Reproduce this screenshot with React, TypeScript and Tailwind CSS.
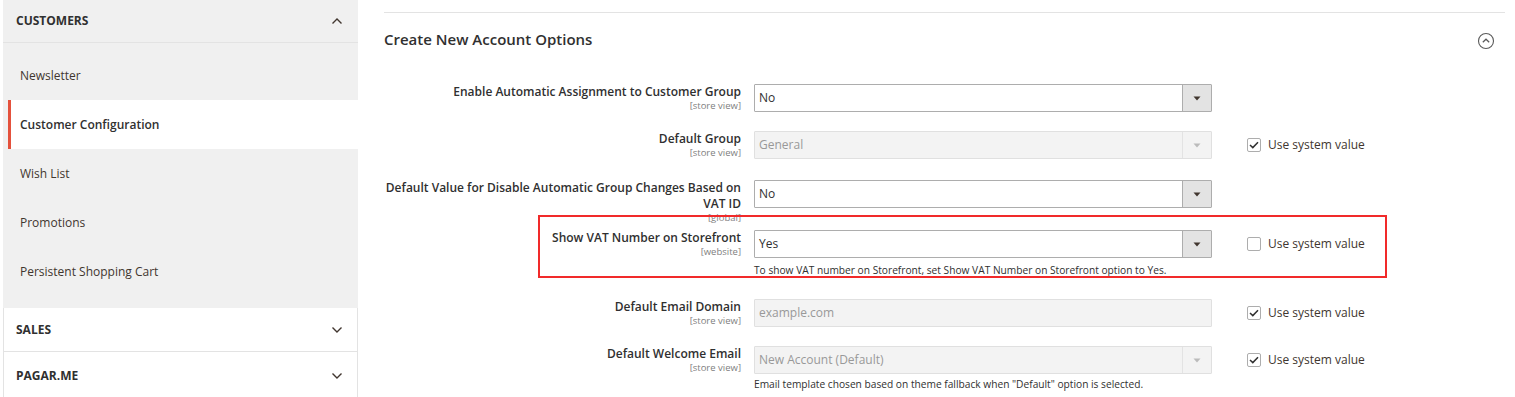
import React from "react";

const font = { fontFamily: '"Open Sans", "Noto Sans", Arial, sans-serif' };

function Chevron({ up }: { up?: boolean }) {
  return (
    <svg width="12" height="8" viewBox="0 0 12 8" className="text-[#41362f]">
      {up ? (
        <path d="M1.5 6.5 L6 2 L10.5 6.5" fill="none" stroke="currentColor" strokeWidth="1.4" />
      ) : (
        <path d="M1.5 1.5 L6 6 L10.5 1.5" fill="none" stroke="currentColor" strokeWidth="1.4" />
      )}
    </svg>
  );
}

function Sidebar() {
  const items = ["Newsletter", "Customer Configuration", "Wish List", "Promotions", "Persistent Shopping Cart"];
  return (
    <div className="ml-[3px] w-[355px] shrink-0 flex flex-col">
      <div className="h-[43px] bg-[#f0f0f0] border-b border-[#e3e3e3] flex items-center justify-between pl-[13px] pr-[15px]">
        <span className="text-[12px] font-bold text-[#303030]">CUSTOMERS</span>
        <Chevron up />
      </div>
      <div className="bg-[#f0f0f0] pt-[8px] pb-[12px]">
        {items.map((it) => {
          const active = it === "Customer Configuration";
          return (
            <div
              key={it}
              className={
                active
                  ? "h-[49px] ml-[5px] bg-white border-l-[3px] border-[#e4513c] flex items-center pl-[9px] text-[12px] text-[#303030] font-semibold"
                  : "h-[49px] flex items-center pl-[17px] text-[12px] text-[#41362f]"
              }
            >
              {it}
            </div>
          );
        })}
      </div>
      <div className="h-[44px] bg-white border-x border-b border-[#e3e3e3] flex items-center justify-between pl-[12px] pr-[14px]">
        <span className="text-[12px] font-bold text-[#303030]">SALES</span>
        <Chevron />
      </div>
      <div className="h-[45px] pt-[3px] bg-white border-x border-[#e3e3e3] flex items-center justify-between pl-[12px] pr-[14px]">
        <span className="text-[12px] font-bold text-[#303030]">PAGAR.ME</span>
        <Chevron />
      </div>
    </div>
  );
}

function Select({ value, disabled, noButton }: { value: string; disabled?: boolean; noButton?: boolean }) {
  return (
    <div
      className={
        "h-[28px] w-[458px] flex rounded-[1px] border " +
        (disabled ? "border-[#e0e0e0] bg-[#f3f3f3]" : "border-[#adadad] bg-white")
      }
    >
      <div
        className={
          "flex-1 flex items-center pl-[4px] text-[12px] " + (disabled ? "text-[#999]" : "text-[#303030]")
        }
      >
        {value}
      </div>
      {!noButton && (
        <div
          className={
            "w-[29px] flex items-center justify-center border-l " +
            (disabled ? "bg-[#f3f3f3] border-[#e3e3e3]" : "bg-[#e3e3e3] border-[#adadad]")
          }
        >
          <svg width="8" height="5" viewBox="0 0 8 5">
            <path d="M0.5 0.5 L7.5 0.5 L4 4.5 Z" fill={disabled ? "#bbb" : "#41362f"} />
          </svg>
        </div>
      )}
    </div>
  );
}

function Check({ checked }: { checked?: boolean }) {
  return (
    <div className="ml-[35px] h-[28px] flex items-center gap-[7px]">
      <div className="w-[14px] h-[14px] border border-[#adadad] rounded-[2px] bg-white flex items-center justify-center">
        {checked && (
          <svg width="10" height="8" viewBox="0 0 10 8">
            <path d="M1 4 L3.8 6.6 L9 1.2" fill="none" stroke="#303030" strokeWidth="1.5" />
          </svg>
        )}
      </div>
      <span className="text-[12px] text-[#41362f]">Use system value</span>
    </div>
  );
}

function Row({
  label,
  scope,
  children,
  check,
  className,
}: {
  label: React.ReactNode;
  scope: string;
  children: React.ReactNode;
  check?: "on" | "off";
  className?: string;
}) {
  return (
    <div className={"flex items-start " + (className || "")}>
      <div className="w-[357px] shrink-0 text-right">
        <div className="text-[12px] leading-[16px] font-semibold text-[#303030] whitespace-nowrap">{label}</div>
        <div className="text-[9.5px] leading-[11px] text-[#808080]">{scope}</div>
      </div>
      <div className="ml-[13px] flex flex-col">{children}</div>
      {check && <Check checked={check === "on"} />}
    </div>
  );
}

export default function App() {
  return (
    <div className="w-[1515px] h-[397px] overflow-hidden bg-white flex" style={font}>
      <Sidebar />
      <div className="ml-[26px] w-[1121px] flex flex-col">
        <div className="mt-[12px] h-px bg-[#e3e3e3]" />
        <div className="mt-[15px] flex items-center justify-between">
          <h2 className="text-[15px] leading-[20px] font-semibold text-[#303030]">Create New Account Options</h2>
          <svg width="18" height="18" viewBox="0 0 18 18" className="mr-[10px] mt-[4px]">
            <circle cx="9" cy="9" r="7.5" fill="none" stroke="#5a5a5a" strokeWidth="1.1" />
            <path d="M5.8 10.3 L9 7.2 L12.2 10.3" fill="none" stroke="#5a5a5a" strokeWidth="1.2" />
          </svg>
        </div>

        <Row className="mt-[34px]" label="Enable Automatic Assignment to Customer Group" scope="[store view]">
          <Select value="No" />
        </Row>
        <Row className="mt-[19px]" label="Default Group" scope="[store view]" check="on">
          <Select value="General" disabled />
        </Row>
        <Row
          className="mt-[21px]"
          label={
            <>
              Default Value for Disable Automatic Group Changes Based on
              <br />
              VAT ID
            </>
          }
          scope="[global]"
        >
          <Select value="No" />
        </Row>
        <div className="relative mt-[7px]">
          <Row label="Show VAT Number on Storefront" scope="[website]" check="off">
            <Select value="Yes" />
            <div className="mt-[6px] text-[10.2px] leading-[13px] text-[#303030]">
              To show VAT number on Storefront, set Show VAT Number on Storefront option to Yes.
            </div>
          </Row>
          <div className="absolute left-[154px] top-[-15px] w-[849px] h-[63px] border-2 border-[#f12a2a] pointer-events-none" />
        </div>
        <Row className="mt-[22px]" label="Default Email Domain" scope="[store view]" check="on">
          <Select value="example.com" disabled noButton />
        </Row>
        <Row className="mt-[19px]" label="Default Welcome Email" scope="[store view]" check="on">
          <Select value="New Account (Default)" disabled />
          <div className="mt-[4px] text-[10.2px] leading-[13px] text-[#303030]">
            Email template chosen based on theme fallback when "Default" option is selected.
          </div>
        </Row>
      </div>
    </div>
  );
}
